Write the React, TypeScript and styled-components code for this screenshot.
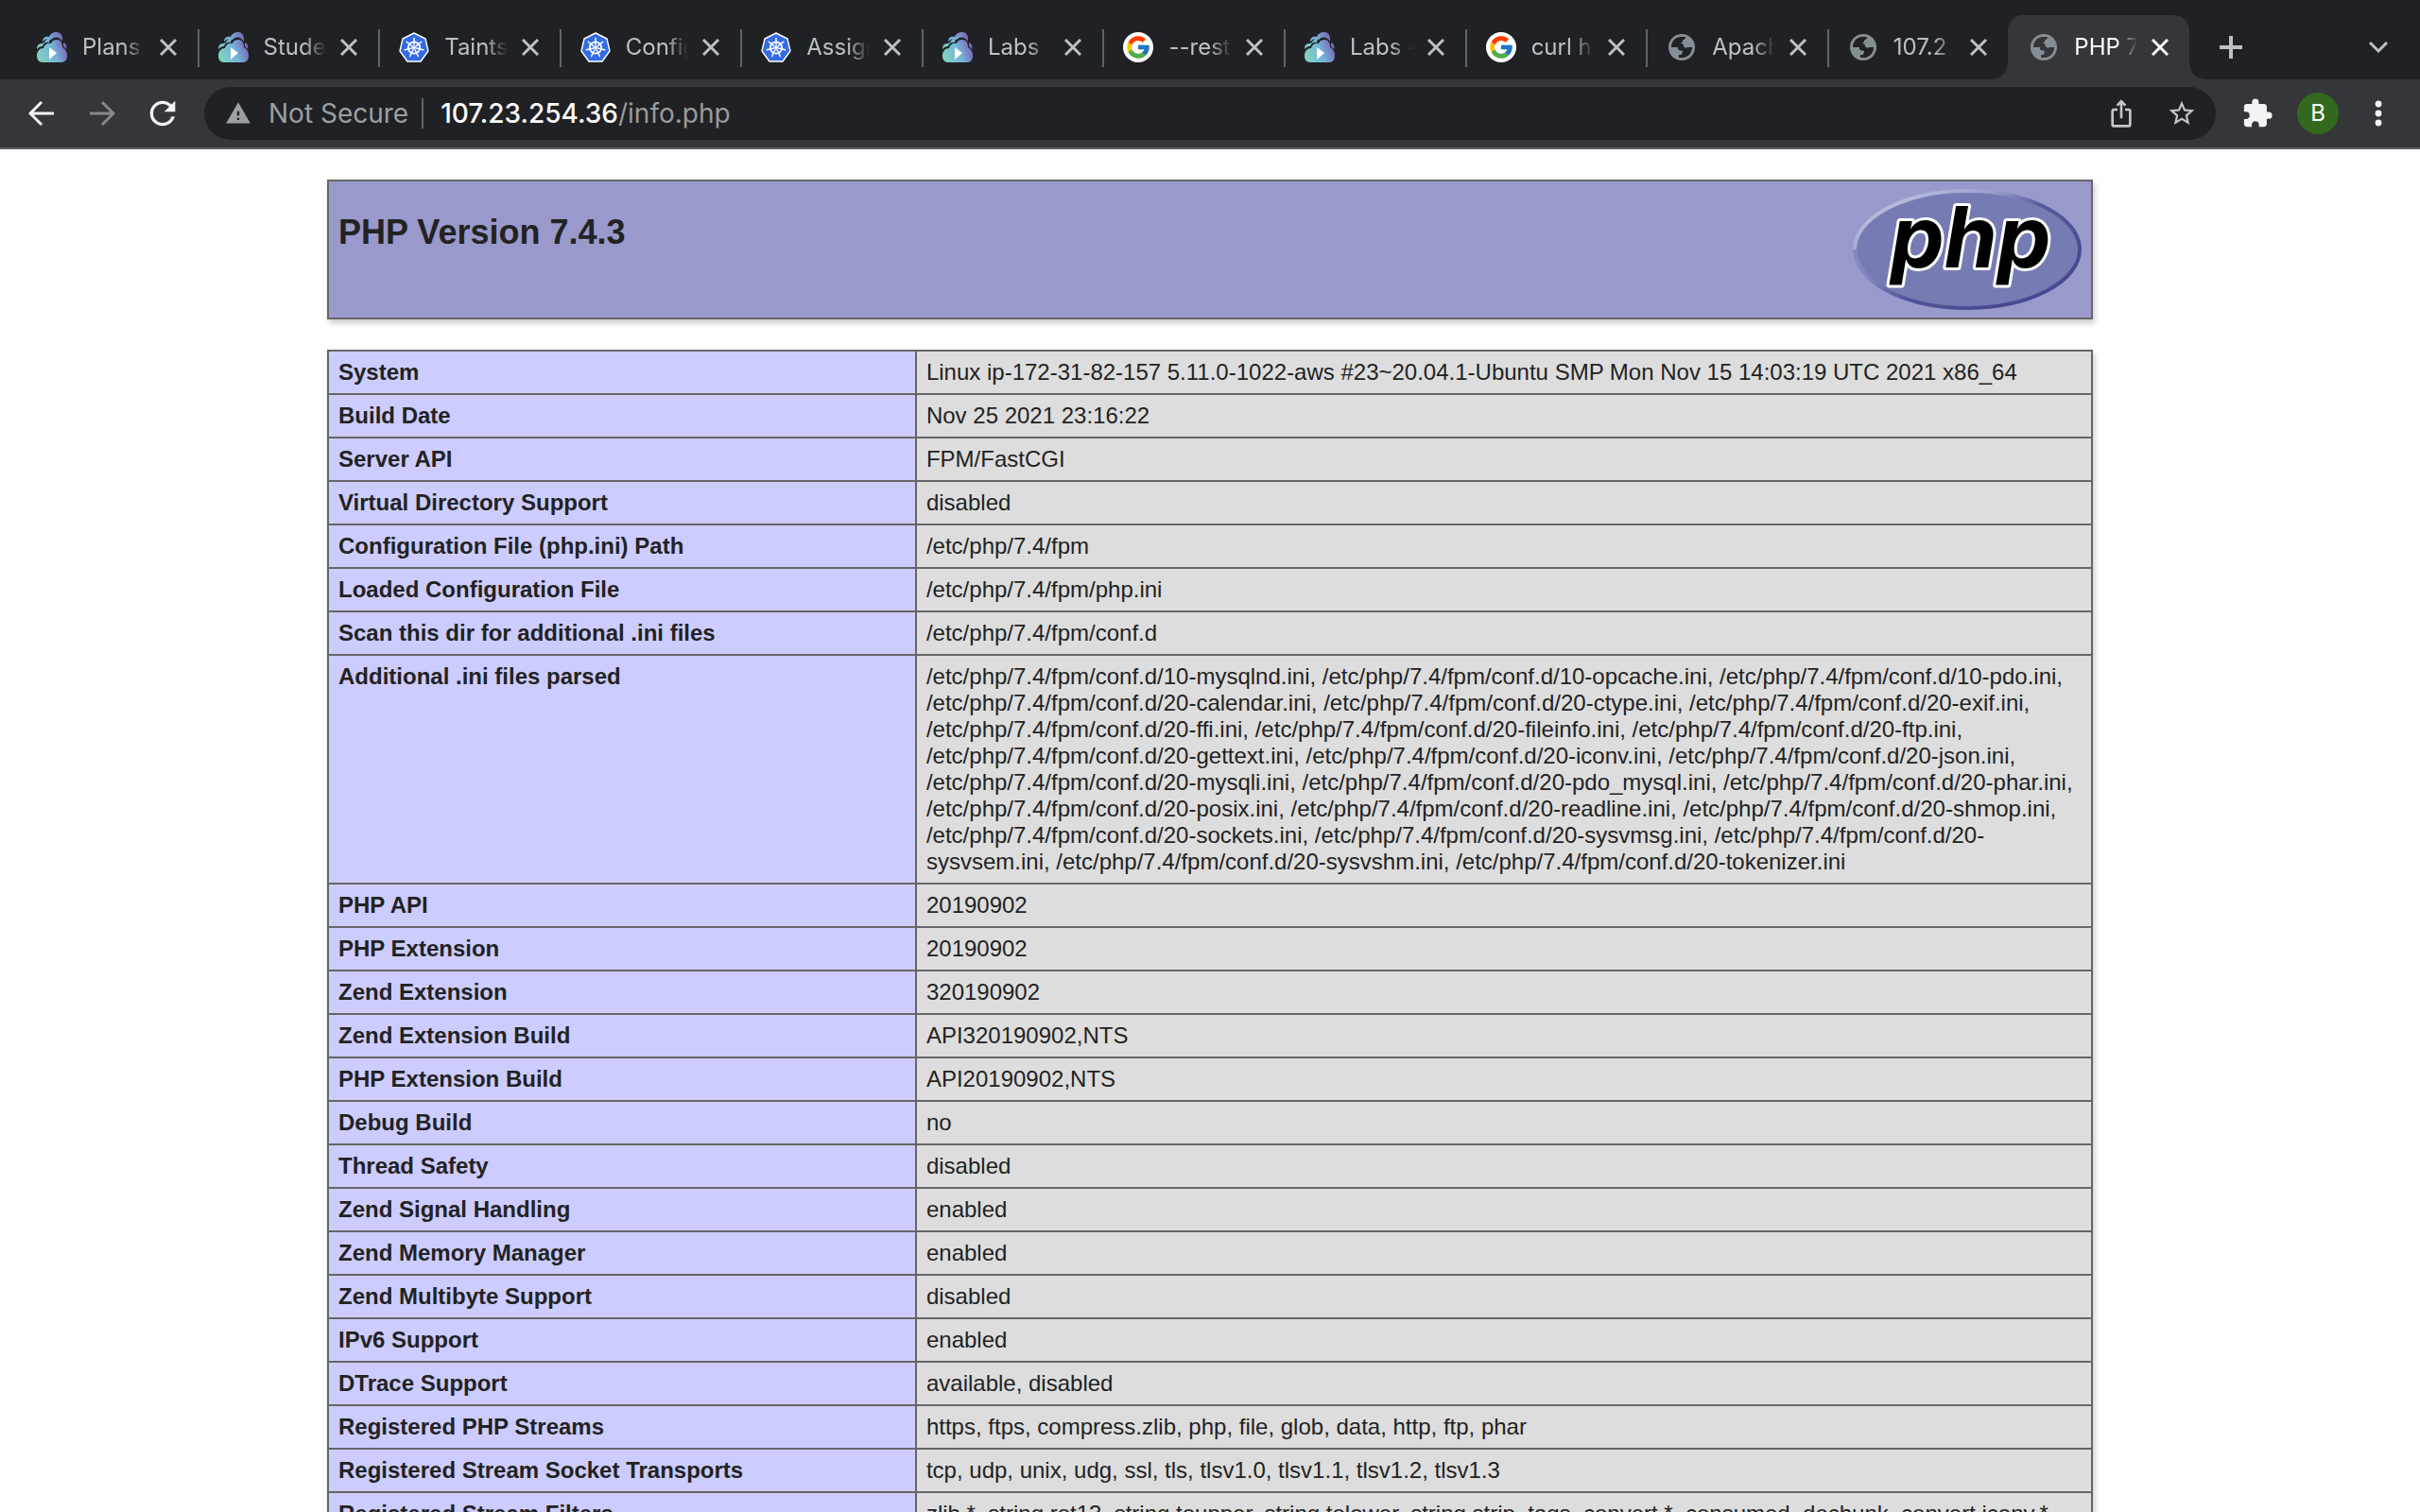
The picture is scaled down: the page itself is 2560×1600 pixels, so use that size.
import React, { useId } from "react";
import styled, { createGlobalStyle } from "styled-components";
import { FcGoogle } from "react-icons/fc";
import { MdExtension, MdIosShare, MdRefresh, MdStarBorder, MdWarning } from "react-icons/md";

const chromeFont = `Inter, Roboto, "Liberation Sans", sans-serif`;
const pageFont = `"Liberation Sans", Arial, sans-serif`;

const GlobalStyle = createGlobalStyle`
  * { box-sizing: border-box; }
  html, body { margin: 0; background: #ffffff; }
  body { font-family: ${pageFont}; color: #222222; }
`;

const Window = styled.div`
  display: flex;
  flex-direction: column;
  height: 100vh;
  overflow: hidden;
`;

const TabStrip = styled.header`
  display: flex;
  flex: none;
  align-items: stretch;
  height: 84px;
  padding: 16px 28px 0 17px;
  background: #202124;
  color: #bdc1c6;
`;

const TabList = styled.div`
  display: flex;
  flex: 1;
  min-width: 0;
`;

const TabItem = styled.div<{ $active: boolean; $divided: boolean }>`
  position: relative;
  display: flex;
  flex: 1 1 0;
  min-width: 0;
  align-items: center;
  padding: 0 15px 0 22px;
  border-radius: 16px 16px 0 0;
  color: ${(p) => (p.$active ? "#ffffff" : "#bdc1c6")};
  background: ${(p) => (p.$active ? "#35363a" : "transparent")};

  ${(p) =>
    p.$divided &&
    `&::after {
      content: "";
      position: absolute;
      right: -2px;
      top: 15px;
      width: 2px;
      height: 40px;
      background: #5f6368;
    }`}
`;

const Flare = styled.span<{ $side: "left" | "right" }>`
  position: absolute;
  bottom: 0;
  ${(p) => p.$side}: -16px;
  width: 16px;
  height: 16px;
  background: radial-gradient(
    circle at ${(p) => (p.$side === "left" ? "0 0" : "100% 0")},
    transparent 15px,
    #35363a 16px
  );
`;

const TabButton = styled.button`
  display: flex;
  flex: 1;
  min-width: 0;
  align-items: center;
  gap: 16px;
  padding: 0;
  border: 0;
  background: none;
  color: inherit;
  font: 24px/32px ${chromeFont};
  text-align: left;

  svg { flex: none; }
`;

const TabTitle = styled.span`
  flex: 1;
  min-width: 0;
  overflow: hidden;
  white-space: nowrap;
  mask-image: linear-gradient(to right, #000 65%, transparent 100%);
`;

const IconButton = styled.button<{ $size?: number }>`
  display: flex;
  flex: none;
  align-items: center;
  justify-content: center;
  width: ${(p) => p.$size ?? 32}px;
  height: ${(p) => p.$size ?? 32}px;
  padding: 0;
  border: 0;
  background: none;
  color: inherit;
`;

const TabClose = styled(IconButton)`
  margin-left: 8px;
`;

const StripActions = styled.div`
  display: flex;
  flex: none;
  align-items: center;
  justify-content: space-between;
  width: 216px;
  padding-left: 28px;
`;

const Toolbar = styled.nav`
  display: flex;
  flex: none;
  align-items: center;
  height: 74px;
  padding: 0 26px 0 20px;
  background: #35363a;
  border-bottom: 2px solid #5f6063;
  color: #f1f3f4;
`;

const NavButtons = styled.div`
  display: flex;
  gap: 16px;
  margin-right: 20px;
`;

const Omnibox = styled.form`
  display: flex;
  flex: 1;
  min-width: 0;
  align-items: center;
  height: 56px;
  padding: 0 20px 0 22px;
  border-radius: 28px;
  background: #202124;
  font: 28px/36px ${chromeFont};
`;

const Security = styled.button`
  display: flex;
  align-items: center;
  gap: 18px;
  height: 32px;
  padding: 0 14px 0 0;
  border: 0;
  border-right: 2px solid #5f6368;
  background: none;
  color: #9aa0a6;
  font: inherit;
  white-space: nowrap;
`;

const Address = styled.a`
  flex: 1;
  min-width: 0;
  padding-left: 18px;
  overflow: hidden;
  color: #9a9b9d;
  text-decoration: none;
  white-space: nowrap;

  strong { color: #ffffff; font-weight: 500; }
`;

const OmniboxActions = styled.div`
  display: flex;
  gap: 32px;
  color: #c4c6c8;
`;

const ToolbarActions = styled.div`
  display: flex;
  align-items: center;
  gap: 24px;
  margin-left: 26px;
`;

const Avatar = styled.button`
  width: 44px;
  height: 44px;
  padding: 0;
  border: 0;
  border-radius: 50%;
  background: #33691e;
  color: #ffffff;
  font: 24px/44px ${chromeFont};
`;

const Page = styled.main`
  flex: 1;
  min-height: 0;
  padding: 32px;
  overflow-y: auto;
  scrollbar-width: none;
`;

const Content = styled.div`
  display: flex;
  flex-direction: column;
  gap: 32px;
  max-width: 1868px;
  margin: 0 auto;
`;

const Banner = styled.section`
  display: flex;
  align-items: flex-start;
  justify-content: space-between;
  padding: 8px 10px;
  border: 2px solid #666666;
  background: #9999cc;
  box-shadow: 2px 4px 6px #cccccc;
`;

const Title = styled.h1`
  margin: 24px 0;
  font: 700 36px/44px ${pageFont};
`;

const InfoTable = styled.table`
  width: 100%;
  table-layout: fixed;
  border-collapse: collapse;
  box-shadow: 2px 4px 6px #cccccc;
  font-size: 24px;
  line-height: 28px;
  font-variant-ligatures: none;
`;

const NameCell = styled.th`
  width: 33.33%;
  padding: 8px 10px;
  border: 2px solid #666666;
  background: #ccccff;
  font-weight: 700;
  text-align: left;
  vertical-align: top;
`;

const ValueCell = styled.td`
  padding: 8px 10px;
  border: 2px solid #666666;
  background: #dddddd;
  vertical-align: top;
`;

function CloudIcon() {
  const id = useId();
  return (
    <svg width="32" height="32" viewBox="0 0 32 32" aria-hidden="true">
      <defs>
        <linearGradient id={id} gradientUnits="userSpaceOnUse" x1="0" y1="26" x2="31" y2="14">
          <stop offset="0" stopColor="#80d6bd" />
          <stop offset="0.55" stopColor="#74b4d8" />
          <stop offset="1" stopColor="#7a62b4" />
        </linearGradient>
      </defs>
      <g fill={`url(#${id})`}>
        <path d="M0 18C0 14 2 12 5 12C7 12 8 11 9 9C11 6 14 5 17 6C14 7 13 9 13 11C9 10 7 12 6 15C3 15 2 16 0 18Z" />
        <path d="M6 10C6 6 9 4 13 5C14 2 17 0 21 0C25 0 27 3 27 7L27 10C24 5 19 4 15 8C12 6 9 7 6 10Z" />
        <path d="M28 11C31 12 32 15 31 18L28 15Z" />
        <path d="M6 32C2 32 0 29 0 25C0 20 3 17 7 17C8 13 11 11 15 12C16 9 18 8 21 8C25 8 27 11 27 16C30 18 32 20 32 25C32 29 30 32 26 32Z" />
      </g>
      <path d="M13 16L21 22L13 29Z" fill="#fff" />
    </svg>
  );
}

function KubernetesIcon() {
  const spokes = Array.from({ length: 7 }, (_, i) => (i * 360) / 7);
  return (
    <svg width="32" height="32" viewBox="0 0 32 32" aria-hidden="true">
      <path
        d="M16 1L28 7L31 20L23 31H9L1 20L4 7Z"
        fill="#326ce5"
        stroke="#fff"
        strokeWidth="1.4"
        strokeLinejoin="round"
      />
      <circle cx="16" cy="16.5" r="6.2" fill="none" stroke="#fff" strokeWidth="1.8" />
      {spokes.map((angle) => (
        <path
          key={angle}
          d="M16 14V6.5"
          stroke="#fff"
          strokeWidth="1.5"
          strokeLinecap="round"
          transform={`rotate(${angle} 16 16.5)`}
        />
      ))}
      <circle cx="16" cy="16.5" r="1.8" fill="#fff" />
    </svg>
  );
}

function GoogleIcon() {
  return (
    <svg width="32" height="32" viewBox="0 0 32 32" aria-hidden="true">
      <circle cx="16" cy="16" r="16" fill="#fff" />
      <FcGoogle x="2" y="2" width="28" height="28" size={28} />
    </svg>
  );
}

function GlobeIcon() {
  return (
    <svg width="32" height="32" viewBox="0 0 32 32" aria-hidden="true">
      <path
        fillRule="evenodd"
        fill="#858e94"
        d="M16 2A14 14 0 1 1 16 30A14 14 0 1 1 16 2Z
           M5 16C5 10 9 5 15 5H20C20 7 19 8 17 8.500V10C17 11 15 11 15 12C17 12 18 13 18 15C19 17 21 17 22 16H27C27 22 23 26 18 27L13 27V24H16C16 22 17 22 17 20C15 19 12 20 12 17V16Z"
      />
    </svg>
  );
}

const favicons = { cloud: CloudIcon, kube: KubernetesIcon, google: GoogleIcon, globe: GlobeIcon };

function CloseIcon() {
  return (
    <svg width="18" height="18" viewBox="0 0 18 18" fill="none" stroke="currentColor" strokeWidth="3" aria-hidden="true">
      <path d="M1 1L17 17M17 1L1 17" />
    </svg>
  );
}

function ArrowIcon({ forward }: { forward?: boolean }) {
  return (
    <svg width="28" height="28" viewBox="0 0 28 28" fill="none" stroke={forward ? "#86888b" : "#f1f3f4"} strokeWidth="3" aria-hidden="true">
      <path d={forward ? "M1 14H26M14 2L26 14L14 26" : "M27 14H2M14 2L2 14L14 26"} />
    </svg>
  );
}

function PhpLogo() {
  return (
    <svg width="242" height="128" viewBox="0 0 242 128" role="img" aria-label="PHP logo">
      <defs>
        <linearGradient id="php-rim" gradientUnits="userSpaceOnUse" x1="80" y1="0" x2="150" y2="128">
          <stop offset="0" stopColor="#b4b8dc" />
          <stop offset="0.25" stopColor="#9a9ccc" />
          <stop offset="0.5" stopColor="#55589c" />
          <stop offset="1" stopColor="#484a90" />
        </linearGradient>
        <linearGradient id="php-left-rim" x1="0" y1="0" x2="1" y2="0">
          <stop offset="0" stopColor="#8588be" />
          <stop offset="0.45" stopColor="#8588be" stopOpacity="0" />
        </linearGradient>
      </defs>
      <ellipse cx="121" cy="64" rx="119" ry="62" fill="#777bb3" stroke="url(#php-rim)" strokeWidth="4" />
      <path d="M2 64A119 62 0 0 0 121 126" fill="none" stroke="url(#php-left-rim)" strokeWidth="4" />
      <text
        x="40"
        y="83"
        fontFamily="Inter, sans-serif"
        fontSize="90"
        fontWeight="700"
        fontStyle="italic"
        fill="#000"
        stroke="#fff"
        strokeWidth="6"
        strokeLinejoin="round"
        paintOrder="stroke"
      >
        php
      </text>
    </svg>
  );
}

const tabs: { title: string; icon: keyof typeof favicons }[] = [
  { title: "Plans", icon: "cloud" },
  { title: "Stude", icon: "cloud" },
  { title: "Taints", icon: "kube" },
  { title: "Config", icon: "kube" },
  { title: "Assign", icon: "kube" },
  { title: "Labs -", icon: "cloud" },
  { title: "--rest", icon: "google" },
  { title: "Labs -", icon: "cloud" },
  { title: "curl h", icon: "google" },
  { title: "Apach", icon: "globe" },
  { title: "107.2", icon: "globe" },
  { title: "PHP 7", icon: "globe" },
];

const iniFiles = [
  "10-mysqlnd", "10-opcache", "10-pdo", "20-calendar", "20-ctype", "20-exif", "20-ffi", "20-fileinfo",
  "20-ftp", "20-gettext", "20-iconv", "20-json", "20-mysqli", "20-pdo_mysql", "20-phar", "20-posix",
  "20-readline", "20-shmop", "20-sockets", "20-sysvmsg", "20-sysvsem", "20-sysvshm", "20-tokenizer",
];

const rows: [string, string][] = [
  ["System", "Linux ip-172-31-82-157 5.11.0-1022-aws #23~20.04.1-Ubuntu SMP Mon Nov 15 14:03:19 UTC 2021 x86_64"],
  ["Build Date", "Nov 25 2021 23:16:22"],
  ["Server API", "FPM/FastCGI"],
  ["Virtual Directory Support", "disabled"],
  ["Configuration File (php.ini) Path", "/etc/php/7.4/fpm"],
  ["Loaded Configuration File", "/etc/php/7.4/fpm/php.ini"],
  ["Scan this dir for additional .ini files", "/etc/php/7.4/fpm/conf.d"],
  ["Additional .ini files parsed", iniFiles.map((f) => `/etc/php/7.4/fpm/conf.d/${f}.ini`).join(", ")],
  ["PHP API", "20190902"],
  ["PHP Extension", "20190902"],
  ["Zend Extension", "320190902"],
  ["Zend Extension Build", "API320190902,NTS"],
  ["PHP Extension Build", "API20190902,NTS"],
  ["Debug Build", "no"],
  ["Thread Safety", "disabled"],
  ["Zend Signal Handling", "enabled"],
  ["Zend Memory Manager", "enabled"],
  ["Zend Multibyte Support", "disabled"],
  ["IPv6 Support", "enabled"],
  ["DTrace Support", "available, disabled"],
  ["Registered PHP Streams", "https, ftps, compress.zlib, php, file, glob, data, http, ftp, phar"],
  ["Registered Stream Socket Transports", "tcp, udp, unix, udg, ssl, tls, tlsv1.0, tlsv1.1, tlsv1.2, tlsv1.3"],
  ["Registered Stream Filters", "zlib.*, string.rot13, string.toupper, string.tolower, string.strip_tags, convert.*, consumed, dechunk, convert.iconv.*"],
];

function Tab({ title, icon, active, divided }: { title: string; icon: keyof typeof favicons; active: boolean; divided: boolean }) {
  const Favicon = favicons[icon];
  return (
    <TabItem $active={active} $divided={divided}>
      {active && <Flare $side="left" />}
      <TabButton>
        <Favicon />
        <TabTitle>{title}</TabTitle>
      </TabButton>
      <TabClose aria-label="Close tab">
        <CloseIcon />
      </TabClose>
      {active && <Flare $side="right" />}
    </TabItem>
  );
}

export default function App() {
  const last = tabs.length - 1;
  return (
    <Window>
      <GlobalStyle />
      <TabStrip>
        <TabList>
          {tabs.map((tab, i) => (
            <Tab key={i} {...tab} active={i === last} divided={i < last - 1} />
          ))}
        </TabList>
        <StripActions>
          <IconButton aria-label="New tab">
            <svg width="24" height="24" viewBox="0 0 24 24" stroke="currentColor" strokeWidth="4" aria-hidden="true">
              <path d="M12 0V24M0 12H24" />
            </svg>
          </IconButton>
          <IconButton aria-label="Search tabs">
            <svg width="20" height="12" viewBox="0 0 20 12" fill="none" stroke="currentColor" strokeWidth="3" aria-hidden="true">
              <path d="M1 1L10 10L19 1" />
            </svg>
          </IconButton>
        </StripActions>
      </TabStrip>
      <Toolbar>
        <NavButtons>
          <IconButton $size={48} aria-label="Back"><ArrowIcon /></IconButton>
          <IconButton $size={48} aria-label="Forward"><ArrowIcon forward /></IconButton>
          <IconButton $size={48} aria-label="Reload"><MdRefresh size={40} /></IconButton>
        </NavButtons>
        <Omnibox>
          <Security type="button">
            <MdWarning size={28} />
            Not Secure
          </Security>
          <Address href="#">
            <strong>107.23.254.36</strong>/info.php
          </Address>
          <OmniboxActions>
            <IconButton type="button" aria-label="Share"><MdIosShare size={32} /></IconButton>
            <IconButton type="button" aria-label="Bookmark"><MdStarBorder size={36} /></IconButton>
          </OmniboxActions>
        </Omnibox>
        <ToolbarActions>
          <IconButton $size={36} aria-label="Extensions"><MdExtension size={34} /></IconButton>
          <Avatar>B</Avatar>
          <IconButton $size={36} aria-label="Menu">
            <svg width="8" height="28" viewBox="0 0 8 28" fill="currentColor" aria-hidden="true">
              <circle cx="4" cy="4" r="3.4" />
              <circle cx="4" cy="14" r="3.4" />
              <circle cx="4" cy="24" r="3.4" />
            </svg>
          </IconButton>
        </ToolbarActions>
      </Toolbar>
      <Page>
        <Content>
          <Banner>
            <Title>PHP Version 7.4.3</Title>
            <PhpLogo />
          </Banner>
          <InfoTable>
            <tbody>
              {rows.map(([name, value]) => (
                <tr key={name}>
                  <NameCell scope="row">{name}</NameCell>
                  <ValueCell>{value}</ValueCell>
                </tr>
              ))}
            </tbody>
          </InfoTable>
        </Content>
      </Page>
    </Window>
  );
}
